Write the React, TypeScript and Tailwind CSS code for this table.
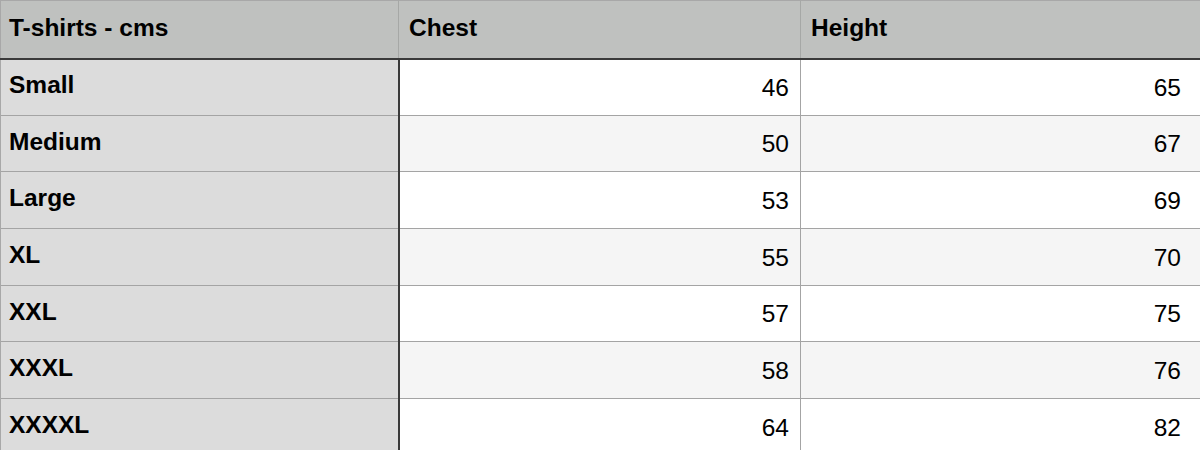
const rows = [
  { size: "Small", chest: 46, height: 65 },
  { size: "Medium", chest: 50, height: 67 },
  { size: "Large", chest: 53, height: 69 },
  { size: "XL", chest: 55, height: 70 },
  { size: "XXL", chest: 57, height: 75 },
  { size: "XXXL", chest: 58, height: 76 },
  { size: "XXXXL", chest: 64, height: 82 },
];

export default function App() {
  return (
    <div className="w-[1200px] h-[450px] overflow-hidden bg-white font-['Liberation_Sans',Arial,sans-serif] text-[24.5px] text-black">
      <table className="w-full border-collapse table-fixed">
        <colgroup>
          <col className="w-[398px]" />
          <col className="w-[402px]" />
          <col />
        </colgroup>
        <thead>
          <tr className="h-[58px] bg-[#bfc1bf] border-b-[2px] border-b-[#3a3a3a]">
            <th className="text-left font-bold px-[8px] pb-[1px] border-t border-l border-t-[#a8a8a8] border-l-[#a8a8a8] border-r border-r-[#a6a8a6]">T-shirts - cms</th>
            <th className="text-left font-bold px-[10px] pb-[1px] border-t border-t-[#a8a8a8] border-r border-r-[#a6a8a6]">Chest</th>
            <th className="text-left font-bold px-[10px] pb-[1px] border-t border-t-[#a8a8a8]">Height</th>
          </tr>
        </thead>
        <tbody>
          {rows.map((row, i) => (
            <tr key={row.size} className={`h-[56.7px] border-b border-b-[#a4a4a4] ${i % 2 === 0 ? "bg-white" : "bg-[#f5f5f5]"}`}>
              <td className="bg-[#dcdcdc] font-bold px-[8px] pb-[3px] border-l border-l-[#a8a8a8] border-r-[2px] border-r-[#3a3a3a]">{row.size}</td>
              <td className="text-right px-[11px] pt-[2px] border-r border-r-[#a4a4a4]">{row.chest}</td>
              <td className="text-right px-[19px] pt-[2px]">{row.height}</td>
            </tr>
          ))}
        </tbody>
      </table>
    </div>
  );
}
